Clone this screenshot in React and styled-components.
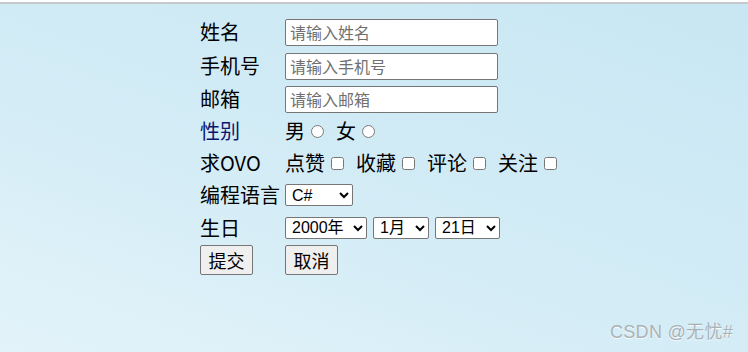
import React from "react";
import styled, { createGlobalStyle } from "styled-components";

const GlobalStyle = createGlobalStyle`
  html, body {
    margin: 0;
    padding: 0;
  }
  body {
    font-family: "Noto Sans CJK SC", "Liberation Sans", sans-serif;
  }
`;

const Page = styled.div`
  position: relative;
  width: 748px;
  height: 352px;
  overflow: hidden;
  box-sizing: border-box;
  border-top: 2px solid #ffffff;
  background: linear-gradient(200deg, #c8e7f3 0%, #d3ecf6 55%, #e3f3fa 100%);
`;

const TopRule = styled.div`
  height: 2px;
  background: #c6c9cb;
`;

const Form = styled.form`
  display: grid;
  grid-template-columns: 85px auto;
  grid-template-rows: 34px 34px 32px 32px 32px 32px 33px 31px;
  align-items: center;
  margin: 11px 0 0 200px;
  font-size: 20px;
  line-height: 22px;
  color: #000;
`;

const Label = styled.span`
  color: ${(p) => p.$color || "#000"};
  white-space: nowrap;
`;

const Field = styled.div`
  display: flex;
  align-items: center;
  gap: ${(p) => p.$gap || "0"};
`;

const TextInput = styled.input`
  box-sizing: border-box;
  width: 213px;
  height: 27px;
  margin: 0;
  padding: 0 4px;
  border: 1px solid #767676;
  border-radius: 2px;
  background: #fff;
  font-family: "Noto Sans CJK SC", "Liberation Sans", sans-serif;
  font-size: 16px;
  outline: none;
  &::placeholder {
    color: #707070;
  }
`;

const Choice = styled.label`
  display: inline-flex;
  align-items: center;
  margin-right: 12px;
  input {
    width: 13px;
    height: 13px;
    margin: 1px 0 0 6px;
  }
`;

const Select = styled.select`
  box-sizing: border-box;
  height: 22px;
  width: ${(p) => p.$w}px;
  padding: 0 0 0 2px;
  border: 1px solid #767676;
  border-radius: 2px;
  background: #fff;
  color: #000;
  font-family: "Liberation Sans", "Noto Sans CJK SC", sans-serif;
  font-size: 16px;
`;

const Button = styled.button`
  box-sizing: border-box;
  width: 53px;
  height: 30px;
  padding: 0;
  border: 1px solid #767676;
  border-radius: 2px;
  background: #efefef;
  color: #000;
  font-family: "Noto Sans CJK SC", sans-serif;
  font-size: 18px;
`;

const Watermark = styled.div`
  position: absolute;
  right: 15px;
  bottom: 9px;
  font-family: "Liberation Sans", "Noto Sans CJK SC", sans-serif;
  font-size: 18px;
  letter-spacing: 0.3px;
  color: #a9b2b6;
  text-shadow: 0 1px 1px rgba(255, 255, 255, 0.9);
`;

export default function App() {
  return (
    <>
      <GlobalStyle />
      <Page>
        <TopRule />
        <Form onSubmit={(e) => e.preventDefault()}>
          <Label>姓名</Label>
          <Field>
            <TextInput placeholder="请输入姓名" />
          </Field>

          <Label>手机号</Label>
          <Field>
            <TextInput placeholder="请输入手机号" />
          </Field>

          <Label>邮箱</Label>
          <Field>
            <TextInput placeholder="请输入邮箱" />
          </Field>

          <Label $color="#0a166e">性别</Label>
          <Field>
            <Choice>
              男<input type="radio" name="sex" />
            </Choice>
            <Choice>
              女<input type="radio" name="sex" />
            </Choice>
          </Field>

          <Label>求OVO</Label>
          <Field>
            <Choice>
              点赞<input type="checkbox" />
            </Choice>
            <Choice>
              收藏<input type="checkbox" />
            </Choice>
            <Choice>
              评论<input type="checkbox" />
            </Choice>
            <Choice>
              关注<input type="checkbox" />
            </Choice>
          </Field>

          <Label>编程语言</Label>
          <Field>
            <Select $w={68} defaultValue="C#">
              <option>C#</option>
              <option>Java</option>
              <option>Python</option>
            </Select>
          </Field>

          <Label>生日</Label>
          <Field $gap="6px">
            <Select $w={82} defaultValue="2000年">
              <option>2000年</option>
            </Select>
            <Select $w={56} defaultValue="1月">
              <option>1月</option>
            </Select>
            <Select $w={65} defaultValue="21日">
              <option>21日</option>
            </Select>
          </Field>

          <Field>
            <Button type="submit">提交</Button>
          </Field>
          <Field>
            <Button type="button">取消</Button>
          </Field>
        </Form>
        <Watermark>CSDN @无忧#</Watermark>
      </Page>
    </>
  );
}
